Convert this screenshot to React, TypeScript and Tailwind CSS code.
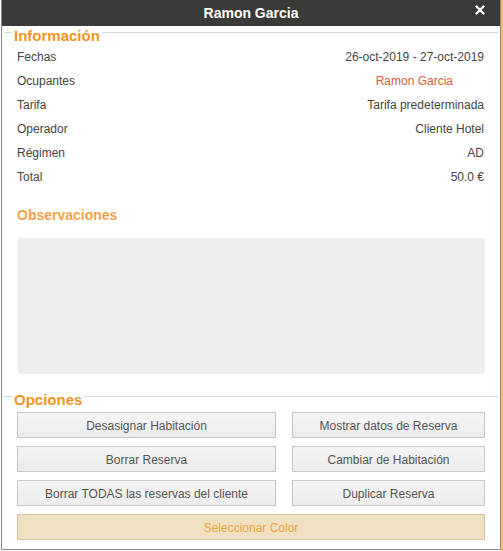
import { X } from "lucide-react"

const rows: { label: string; value: string; accent?: boolean }[] = [
  { label: "Fechas", value: "26-oct-2019 - 27-oct-2019" },
  { label: "Ocupantes", value: "Ramon Garcia", accent: true },
  { label: "Tarifa", value: "Tarifa predeterminada" },
  { label: "Operador", value: "Cliente Hotel" },
  { label: "Régimen", value: "AD" },
  { label: "Total", value: "50.0 €" },
]

const buttons = [
  "Desasignar Habitación",
  "Mostrar datos de Reserva",
  "Borrar Reserva",
  "Cambiar de Habitación",
  "Borrar TODAS las reservas del cliente",
  "Duplicar Reserva",
]

function Legend({ text }: { text: string }) {
  return (
    <div className="mx-[2px] flex h-[19px] items-center">
      <div className="mb-[6px] h-px w-[8px] bg-[#d6d6d6]" />
      <span className="px-[2px] text-[15px] font-bold leading-none text-[#f7941d]">{text}</span>
      <div className="mb-[6px] h-px flex-1 bg-[#d6d6d6]" />
    </div>
  )
}

export default function App() {
  return (
    <div className="flex h-[551px] w-[503px] bg-white font-['Liberation_Sans',Arial,sans-serif]">
      <div className="ml-px flex h-[550px] w-[500px] flex-col border-x border-b border-[#8a8a8a] bg-white">
        <div className="relative flex h-[26px] items-center justify-center bg-[#3a3a38]">
          <span className="text-[14px] font-bold text-white">Ramon Garcia</span>
          <X className="absolute right-[13px] top-[3px] h-[14px] w-[14px] text-white" strokeWidth={4} />
        </div>

        <Legend text="Información" />
        <div className="flex flex-col pl-[15px] pr-[16px]">
          {rows.map((r) => (
            <div key={r.label} className="flex h-[24px] items-center justify-between text-[12px] text-[#444]">
              <span>{r.label}</span>
              <span className={r.accent ? "pr-[31px] text-[#dc5b3c]" : ""}>{r.value}</span>
            </div>
          ))}
        </div>

        <div className="mt-[16px] flex h-[20px] items-center pl-[15px] text-[14px] font-bold text-[#f7a04a]">
          Observaciones
        </div>
        <div className="ml-[16px] mr-[15px] mt-[13px] h-[136px] bg-[#eeeeee]" />

        <div className="mt-[16px]">
          <Legend text="Opciones" />
        </div>
        <div className="mt-[3px] grid grid-cols-[259px_193px] gap-x-[16px] gap-y-[8px] pl-[15px] pr-[14px]">
          {buttons.map((b) => (
            <button
              key={b}
              className="h-[26px] border border-[#c6c6c6] bg-gradient-to-b from-[#f5f5f5] to-[#ececec] pt-px text-[12px] text-[#555]"
            >
              {b}
            </button>
          ))}
          <button className="col-span-2 h-[26px] border border-[#d6c49a] bg-[#efe0c2] pt-px text-[12px] text-[#eda53a]">
            Seleccionar Color
          </button>
        </div>
      </div>
      <div className="flex-1 bg-[#f2c54a]" />
    </div>
  )
}
